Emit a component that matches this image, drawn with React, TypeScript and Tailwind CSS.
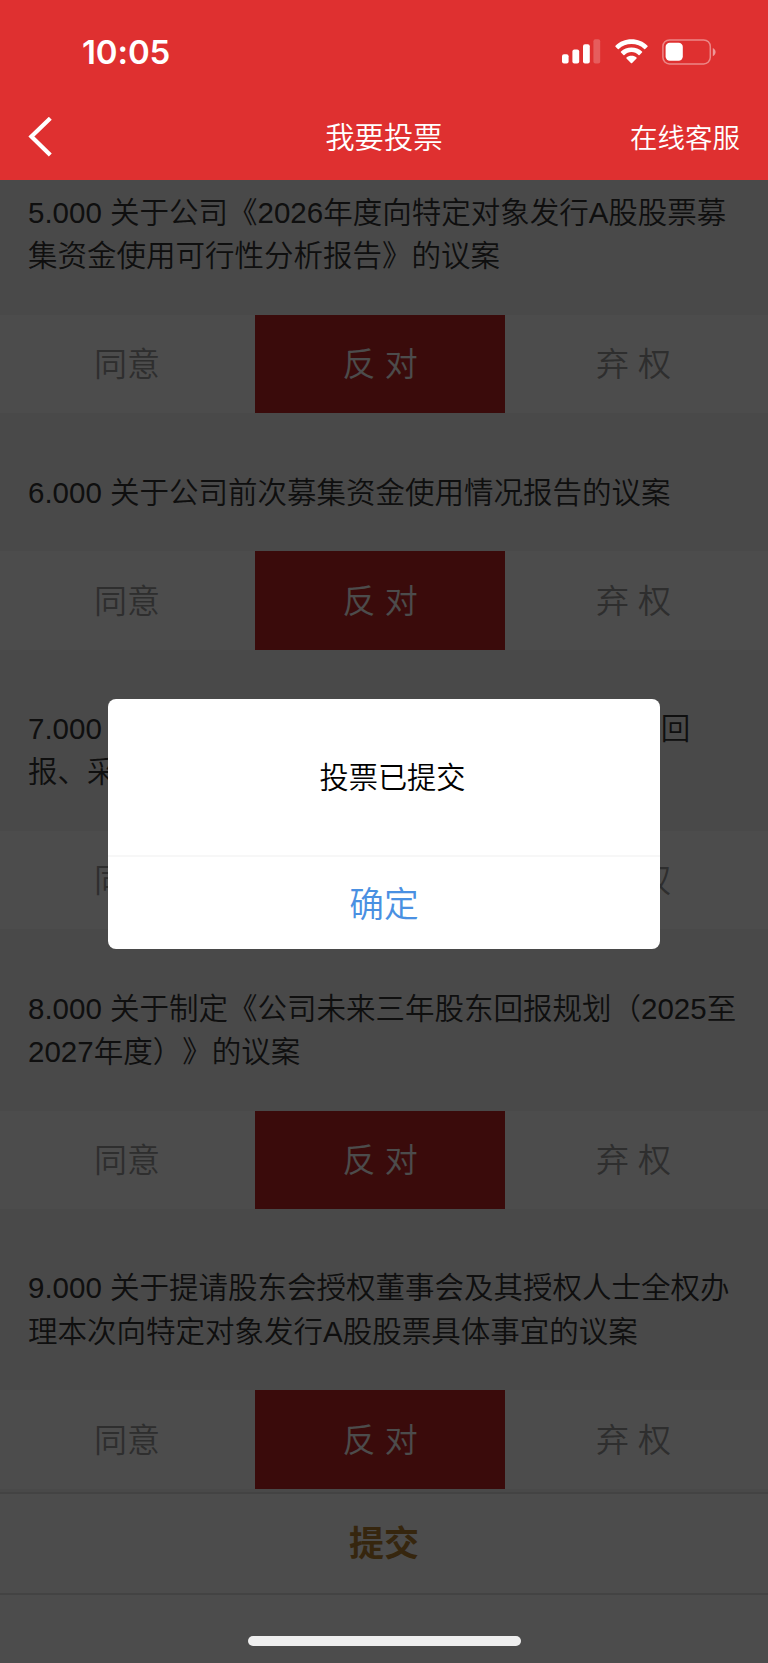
import { useState } from 'react'

type Choice = 'agree' | 'against' | 'abstain'

interface Proposal {
  id: string
  lines: string[]
}

const PROPOSALS: Proposal[] = [
  { id: '5', lines: ['5.000 关于公司《2026年度向特定对象发行A股股票募', '集资金使用可行性分析报告》的议案'] },
  { id: '6', lines: ['6.000 关于公司前次募集资金使用情况报告的议案'] },
  { id: '7', lines: ['7.000 关于公司向特定对象发行A股股票摊薄即期回', '报、采取填补措施及相关主体承诺的议案'] },
  { id: '8', lines: ['8.000 关于制定《公司未来三年股东回报规划（2025至', '2027年度）》的议案'] },
  { id: '9', lines: ['9.000 关于提请股东会授权董事会及其授权人士全权办', '理本次向特定对象发行A股股票具体事宜的议案'] },
]

const OPTIONS: { value: Choice; label: string; width: string }[] = [
  { value: 'agree', label: '同意', width: 'w-[254px] mr-[1.3px]' },
  { value: 'against', label: '反 对', width: 'w-[249.7px]' },
  { value: 'abstain', label: '弃 权', width: 'w-[251px] ml-[3px]' },
]

function SignalIcon() {
  return (
    <svg width="39" height="25" viewBox="0 0 39 25" fill="#fff">
      <rect x="0" y="15.2" width="6.6" height="9.3" rx="2" />
      <rect x="10.4" y="10.4" width="6.8" height="14.1" rx="2" />
      <rect x="21" y="5.2" width="6.8" height="19.3" rx="2" />
      <rect x="31.4" y="0.3" width="6.8" height="24.2" rx="2" opacity="0.22" />
    </svg>
  )
}

function WifiIcon() {
  return (
    <svg width="33" height="25" viewBox="0 0 33 25" fill="#fff">
      <path d="M16.5 0.3C22.7 0.3 28.4 2.7 32.5 6.7Q33 7.2 32.5 7.7L30.2 10Q29.7 10.5 29.2 10C25.9 6.8 21.4 5 16.5 5S7.1 6.8 3.8 10Q3.3 10.5 2.8 10L0.5 7.7Q0 7.2 0.5 6.7C4.6 2.7 10.3 0.3 16.5 0.3Z" />
      <path d="M16.5 8.4C20.6 8.4 24.3 9.9 27 12.4Q27.6 12.9 27 13.5L24.6 15.9Q24.1 16.4 23.5 15.9C21.7 14.2 19.2 13.1 16.5 13.1S11.3 14.2 9.5 15.9Q8.9 16.4 8.4 15.9L6 13.5Q5.4 12.9 6 12.4C8.7 9.9 12.4 8.4 16.5 8.4Z" />
      <path d="M16.5 16.7C18.5 16.7 20.3 17.3 21.5 18.4Q22.1 18.9 21.5 19.5L17.1 24Q16.5 24.6 15.9 24L11.5 19.5Q10.9 18.9 11.5 18.4C12.7 17.3 14.5 16.7 16.5 16.7Z" />
    </svg>
  )
}

function BatteryIcon() {
  return (
    <svg width="54" height="26" viewBox="0 0 54 26" fill="none">
      <rect x="0.9" y="0.9" width="47.4" height="24" rx="6.6" stroke="#fff" strokeOpacity="0.42" strokeWidth="1.5" />
      <rect x="3.6" y="3.8" width="17.2" height="18" rx="4.2" fill="#fff" />
      <path d="M50.8 9v8.2c1.7-.7 2.8-2.3 2.8-4.1s-1.1-3.4-2.8-4.1Z" fill="#fff" fillOpacity="0.5" />
    </svg>
  )
}

function Header() {
  return (
    <header className="h-[179.5px] shrink-0 bg-[#df3030] text-white">
      <div className="flex h-[102px] items-start justify-between pr-[52px] pl-[82px]">
        <span className="mt-[31.6px] font-[Inter,sans-serif] text-[33px] leading-[41px] font-semibold tracking-[-0.1px]">10:05</span>
        <div className="mt-[38.5px] flex items-start">
          <SignalIcon />
          <span className="ml-[13.5px] mt-[0.5px]"><WifiIcon /></span>
          <span className="ml-[14.5px]"><BatteryIcon /></span>
        </div>
      </div>
      <div className="grid h-[70px] grid-cols-3 items-center px-[28px]">
        <button aria-label="返回" className="justify-self-start">
          <svg width="25" height="40" viewBox="0 0 25 40" fill="none" stroke="#fff" strokeWidth="4.2">
            <path d="M22.3 1.3 3.4 19.6 22.3 38" />
          </svg>
        </button>
        <h1 className="pt-[2px] text-center text-[29.4px] leading-[44px] font-[350]">我要投票</h1>
        <button className="justify-self-end pt-[3px] text-[27.5px] leading-[44px]">在线客服</button>
      </div>
    </header>
  )
}

function ProposalItem({ proposal, choice, onChoose }: { proposal: Proposal; choice: Choice; onChoose: (c: Choice) => void }) {
  return (
    <section className="mb-[57.2px]">
      <div className="px-[28px] text-[29.5px] leading-[43.4px] whitespace-nowrap text-[#333]">
        {proposal.lines.map((line) => (
          <p key={line}>{line}</p>
        ))}
      </div>
      <div className="mt-[37.2px] flex h-[98.5px] bg-white">
        {OPTIONS.map((o) => (
          <button
            key={o.value}
            onClick={() => onChoose(o.value)}
            className={`${o.width} pt-[2px] text-[33px] ${choice === o.value ? 'bg-[#c22525] text-white' : 'text-[#999]'}`}
          >
            {o.label}
          </button>
        ))}
      </div>
    </section>
  )
}

export default function App() {
  const [choices, setChoices] = useState<Record<string, Choice>>({})
  const [open, setOpen] = useState(true)

  return (
    <div className="relative flex h-[1663px] w-[768px] flex-col overflow-hidden bg-[#f5f5f5] font-['Liberation_Sans','Noto_Sans_CJK_SC',sans-serif] font-[350] [text-spacing-trim:space-all]">
      <Header />
      <main className="min-h-0 flex-1 overflow-hidden pt-[11.4px]">
        {PROPOSALS.map((p) => (
          <ProposalItem
            key={p.id}
            proposal={p}
            choice={choices[p.id] ?? 'against'}
            onChoose={(c) => setChoices({ ...choices, [p.id]: c })}
          />
        ))}
      </main>
      <footer className="h-[171px] shrink-0 border-t-2 border-[#e0e0e0] bg-white">
        <button className="block h-[101px] w-full border-b-2 border-[#e0e0e0] pt-[2px] text-[35px] font-bold text-[#b58030]">提交</button>
      </footer>

      {/* Mask and confirm dialog */}
      {open && (
        <div className="absolute inset-x-0 top-[179.5px] bottom-0 bg-black/70">
          <div role="dialog" className="mx-auto mt-[519px] flex h-[250px] w-[552px] flex-col overflow-hidden rounded-[8px] bg-white">
            <p className="flex h-[158px] items-center justify-center border-b-2 border-[#f7f7f7] pt-[5px] pl-[17px] text-[29.2px] text-black">投票已提交</p>
            <button onClick={() => setOpen(false)} className="flex-1 pt-[5px] text-[34.7px] text-[#4a90e2]">确定</button>
          </div>
        </div>
      )}

      {/* Home indicator */}
      <div className="absolute bottom-[17px] left-[247.5px] h-[10px] w-[273.5px] rounded-full bg-[#efefef]" />
    </div>
  )
}
